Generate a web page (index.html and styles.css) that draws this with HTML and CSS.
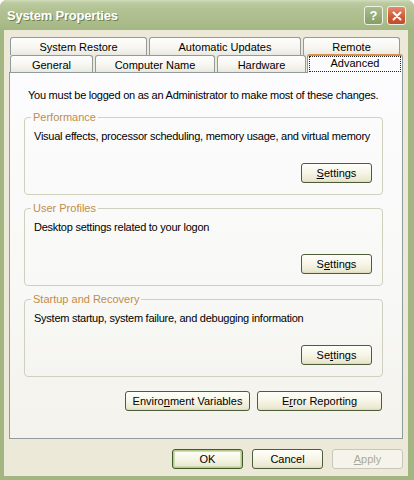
FILE: index.html
```html
<!DOCTYPE html>
<html lang="en">
<head>
  <meta charset="UTF-8">
  <title>System Properties</title>
  <link rel="stylesheet" href="styles.css">
</head>
<body>
  <div class="window">
    <div class="titlebar">
      <span class="caption">System Properties</span>
      <div class="caption-buttons">
        <span class="cbtn help">?</span>
        <span class="cbtn close">
          <svg width="10" height="10" viewBox="0 0 10 10"><path d="M1.5 1.5 L8.5 8.5 M8.5 1.5 L1.5 8.5" stroke="#fff" stroke-width="2" stroke-linecap="round"/></svg>
        </span>
      </div>
    </div>

    <div class="client">
      <div class="tab-row back">
        <div class="tab tab-restore">System Restore</div>
        <div class="tab tab-updates">Automatic Updates</div>
        <div class="tab tab-remote">Remote</div>
      </div>
      <div class="tab-row front">
        <div class="tab tab-general">General</div>
        <div class="tab tab-compname">Computer Name</div>
        <div class="tab tab-hardware">Hardware</div>
        <div class="tab tab-advanced active"><span class="focus">Advanced</span></div>
      </div>

      <div class="panel">
        <p class="intro">You must be logged on as an Administrator to make most of these changes.</p>

        <fieldset class="group">
          <legend>Performance</legend>
          <p>Visual effects, processor scheduling, memory usage, and virtual memory</p>
          <div class="group-actions"><button class="btn"><u>S</u>ettings</button></div>
        </fieldset>

        <fieldset class="group">
          <legend>User Profiles</legend>
          <p>Desktop settings related to your logon</p>
          <div class="group-actions"><button class="btn">S<u>e</u>ttings</button></div>
        </fieldset>

        <fieldset class="group">
          <legend>Startup and Recovery</legend>
          <p>System startup, system failure, and debugging information</p>
          <div class="group-actions"><button class="btn">Se<u>t</u>tings</button></div>
        </fieldset>

        <div class="panel-actions">
          <button class="btn wide">Enviro<u>n</u>ment Variables</button>
          <button class="btn wide">E<u>r</u>ror Reporting</button>
        </div>
      </div>

      <div class="footer">
        <button class="btn default">OK</button>
        <button class="btn">Cancel</button>
        <button class="btn" disabled><u>A</u>pply</button>
      </div>
    </div>
  </div>
</body>
</html>
```

FILE: styles.css
```css
body {
  margin: 0;
  background: #fff;
  font-family: "Liberation Sans", Arial, sans-serif;
  font-size: 11px;
  color: #000;
}
.window {
  width: 414px;
  height: 480px;
  display: flex;
  flex-direction: column;
  background: #a3b682;
  border-radius: 7px 7px 0 0;
  overflow: hidden;
}
.titlebar {
  height: 30px;
  display: flex;
  align-items: center;
  justify-content: space-between;
  padding: 0 8px 0 7px;
  background: linear-gradient(#d2dcbc 0, #bccaa0 3px, #b2c292 10px, #abbc8a 22px, #a3b682 30px);
}
.caption {
  font-weight: bold;
  font-size: 13px;
  color: #fff;
  text-shadow: 1px 1px 0 #6f8150;
  letter-spacing: -0.2px;
}
.caption-buttons {
  display: flex;
  gap: 4px;
  padding-top: 1px;
}
.cbtn {
  width: 17px;
  height: 17px;
  border: 1px solid #eef2e4;
  border-radius: 3px;
  display: flex;
  align-items: center;
  justify-content: center;
  color: #fff;
  font-weight: bold;
  font-size: 13px;
}
.help {
  background: linear-gradient(#a9bc8c, #879e66);
}
.close {
  background: linear-gradient(#e58a6c, #cf5836 60%, #c24b2c);
}

.client {
  flex: 1;
  display: flex;
  flex-direction: column;
  margin: 0 6px 4px 4px;
  padding: 7px 5px 0 5px;
  background: #ece9d8;
}
.tab-row {
  display: flex;
  gap: 2px;
  margin-left: 1px;
}
.tab-row.back {
  height: 18px;
}
.tab-row.front {
  height: 17px;
  align-items: flex-end;
}
.tab {
  box-sizing: border-box;
  height: 100%;
  border: 1px solid #919b9c;
  border-bottom: none;
  border-radius: 3px 3px 0 0;
  background: linear-gradient(#fefefe, #f6f5f0 60%, #e9e8e0);
  display: flex;
  align-items: center;
  justify-content: center;
  padding-top: 1px;
  white-space: nowrap;
}
.tab-restore { width: 137px; }
.tab-updates { width: 152px; }
.tab-remote { width: 97px; }
.tab-general { width: 83px; }
.tab-compname { width: 120px; }
.tab-hardware { width: 89px; }
.tab-advanced { width: 96px; }
.tab.active {
  height: 19px;
  margin-left: -1px;
  margin-bottom: -1px;
  position: relative;
  z-index: 1;
  background: #fcfcfe;
  border-top: 2px solid #d9904f;
  padding: 0 1px 1px 1px;
  align-items: stretch;
}
.focus {
  flex: 1;
  border: 1px dotted #222;
  text-align: center;
  line-height: 13px;
}

.panel {
  flex: 1;
  border: 1px solid #919b9c;
  background: linear-gradient(#fcfcfe, #f8f8f6 60%, #f3f2ec);
  padding: 16px 19px 0 14px;
}
.panel p {
  margin: 0;
  line-height: 13px;
  white-space: nowrap;
  letter-spacing: -0.25px;
}
.intro {
  margin-left: 4px !important;
}
.group {
  margin: 9px 0 0 0;
  padding: 6px 10px 11px 9px;
  border: 1px solid #d0d0bf;
  border-radius: 4px;
}
.group + .group {
  margin-top: 7px;
}
.group legend {
  margin-left: -3px;
  padding: 0 2px;
  line-height: 13px;
  color: #c08d4c;
}
.group-actions {
  display: flex;
  justify-content: flex-end;
  margin-top: 20px;
}
.panel-actions {
  display: flex;
  justify-content: flex-end;
  gap: 7px;
  margin-top: 14px;
  padding-right: 1px;
}

.btn {
  box-sizing: border-box;
  width: 71px;
  height: 20px;
  padding: 0;
  border: 1px solid #4d5c3b;
  border-radius: 3px;
  background: linear-gradient(#fffffb, #f6f5e6 50%, #ebe8d0 90%, #dcd8b8);
  font-family: inherit;
  font-size: 11px;
  color: #000;
}
.btn.wide {
  width: 125px;
}
.btn.default {
  box-shadow: inset 0 0 0 1px #b6cb90, inset 0 0 0 2px #cfdcb2;
  border-color: #405a28;
}
.btn:disabled {
  border-color: #c9c7ba;
  background: #f5f4ea;
  color: #aca899;
}
.footer {
  display: flex;
  justify-content: flex-end;
  gap: 9px;
  padding: 10px 0 7px 0;
}
```
